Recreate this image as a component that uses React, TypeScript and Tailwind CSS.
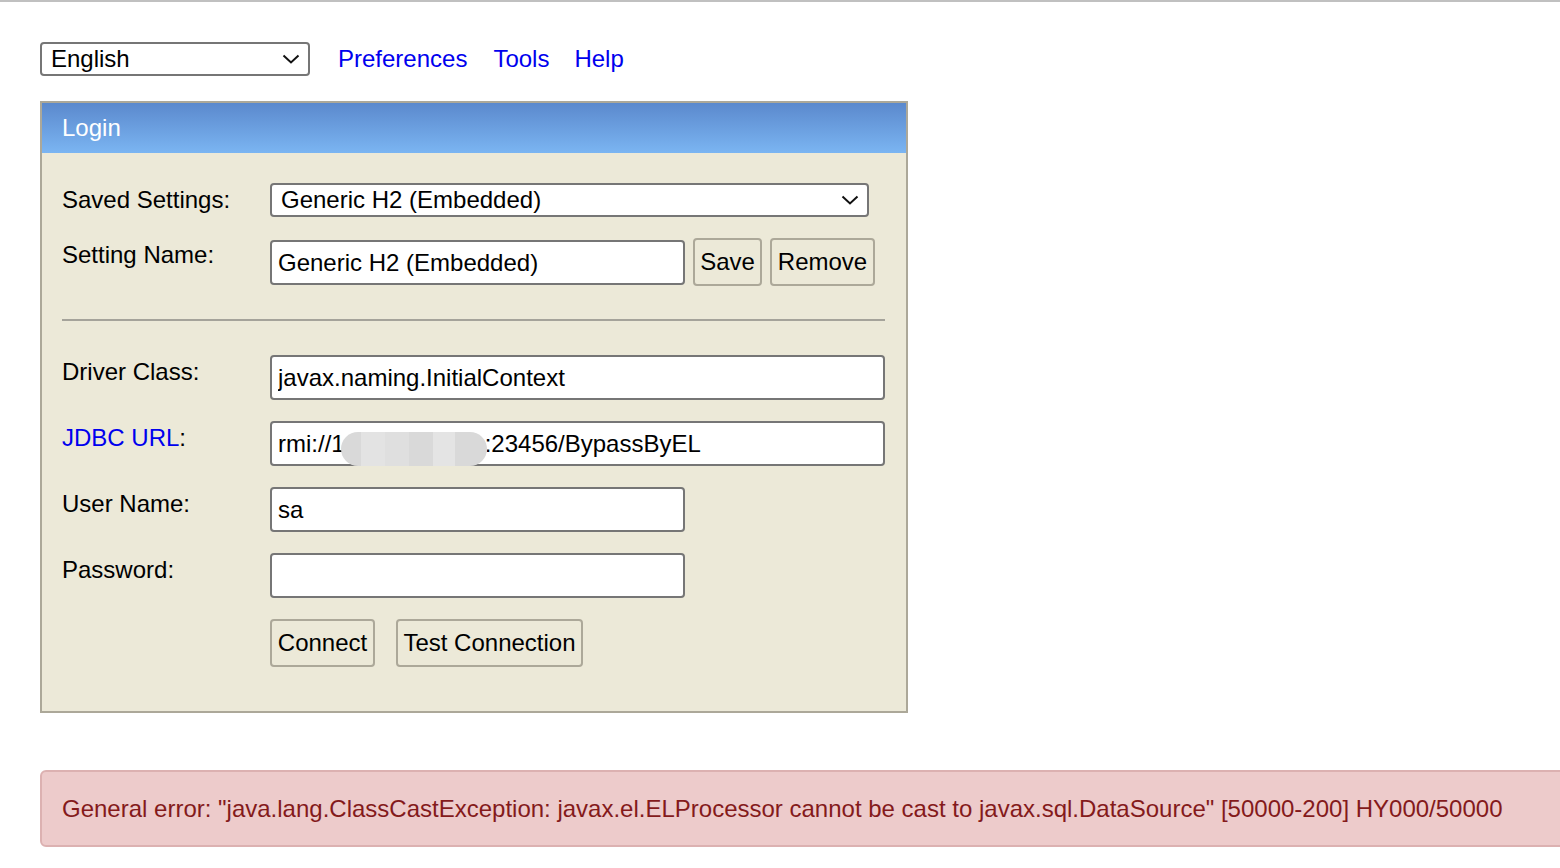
import React from "react";

const font = { fontFamily: '"Liberation Sans", Arial, sans-serif' };

function Chevron() {
  return (
    <svg width="18" height="10" viewBox="0 0 18 10" fill="none">
      <path d="M1.5 1.5 L9 8.5 L16.5 1.5" stroke="#111" strokeWidth="2" />
    </svg>
  );
}

function Field({ label, children, link }: { label: string; children: React.ReactNode; link?: boolean }) {
  return (
    <div className="flex items-start">
      <div className="w-[208px] pt-[3px] leading-[28px] text-black">
        {link ? (
          <>
            <a href="#" className="text-[#0000ee]">{label}</a>:
          </>
        ) : (
          label + ":"
        )}
      </div>
      {children}
    </div>
  );
}

const inputCls =
  "h-[45px] rounded-[4px] border-2 border-[#767676] bg-white px-[6px] text-[24px] text-black outline-none";

export default function App() {
  return (
    <div
      style={font}
      className="min-h-screen overflow-hidden border-t-2 border-[#c0c0c0] bg-white text-[24px]"
    >
      {/* top bar */}
      <div className="flex items-center pl-[40px] pt-[39px]">
        <div className="flex h-[34px] w-[270px] items-center justify-between rounded-[4px] border-2 border-[#767676] pl-[9px] pr-[8px] text-black">
          <span>English</span>
          <Chevron />
        </div>
        <a href="#" className="ml-[28px] text-[#0000ee]">Preferences</a>
        <a href="#" className="ml-[26px] text-[#0000ee]">Tools</a>
        <a href="#" className="ml-[25px] text-[#0000ee]">Help</a>
      </div>

      {/* login panel */}
      <div className="ml-[40px] mt-[24px] w-[868px] border-2 border-[#aca899] bg-[#ece9d8]">
        <div className="flex h-[50px] items-center bg-gradient-to-b from-[#5b89cd] to-[#7bb5f2] px-[20px] text-white">
          Login
        </div>
        <div className="flex flex-col pb-[44px] pl-[20px] pt-[30px]">
          <Field label="Saved Settings">
            <div className="flex h-[34px] w-[599px] items-center justify-between rounded-[4px] border-2 border-[#767676] bg-white pl-[9px] pr-[8px] text-black">
              <span>Generic H2 (Embedded)</span>
              <Chevron />
            </div>
          </Field>

          <div className="mt-[21px]">
            <Field label="Setting Name">
              <div className="flex items-start">
                <input
                  readOnly
                  value="Generic H2 (Embedded)"
                  style={font}
                  className={inputCls + " mt-[2px] h-[44px] w-[415px]"}
                />
                <button style={font} className="ml-[8px] h-[48px] w-[69px] rounded-[4px] border-2 border-[#aca899] text-[24px] text-black">
                  Save
                </button>
                <button style={font} className="ml-[8px] h-[48px] w-[105px] rounded-[4px] border-2 border-[#aca899] text-[24px] text-black">
                  Remove
                </button>
              </div>
            </Field>
          </div>

          <div className="mt-[33px] mr-[21px] h-[2px] bg-[#a5a39a]" />

          <div className="mt-[34px] flex flex-col gap-[21px]">
            <Field label="Driver Class">
              <input readOnly value="javax.naming.InitialContext" style={font} className={inputCls + " w-[615px]"} />
            </Field>
            <Field label="JDBC URL" link>
              <div className={inputCls + " flex h-[44px] w-[615px] items-center"}>
                <span>rmi://1</span>
                <span className="relative inline-block h-[27px] w-[140px]">
                  <span className="absolute left-[-4px] top-[2px] flex h-[34px] w-[146px] overflow-hidden rounded-full bg-[#d9d9d9]">
                    <span className="ml-[20px] h-full w-[24px] bg-[#e3e3e3]" />
                    <span className="h-full w-[24px] bg-[#dfdfdf]" />
                    <span className="ml-[24px] h-full w-[22px] bg-[#e4e4e4]" />
                  </span>
                </span>
                <span>:23456/BypassByEL</span>
              </div>
            </Field>
            <Field label="User Name">
              <input readOnly value="sa" style={font} className={inputCls + " w-[415px]"} />
            </Field>
            <Field label="Password">
              <input readOnly value="" type="password" style={font} className={inputCls + " w-[415px]"} />
            </Field>
            <div className="flex pl-[208px]">
              <button style={font} className="h-[48px] w-[105px] rounded-[4px] border-2 border-[#aca899] text-[24px] text-black">
                Connect
              </button>
              <button style={font} className="ml-[21px] h-[48px] w-[187px] rounded-[4px] border-2 border-[#aca899] text-[24px] text-black">
                Test Connection
              </button>
            </div>
          </div>
        </div>
      </div>

      {/* error */}
      <div className="ml-[40px] mt-[57px] flex h-[77px] w-[1600px] items-center rounded-[6px] border-2 border-[#dcb1b1] bg-[#edcbcb] pl-[20px] text-[#841a1b]">
        General error: "java.lang.ClassCastException: javax.el.ELProcessor cannot be cast to javax.sql.DataSource" [50000-200] HY000/50000
      </div>
    </div>
  );
}
